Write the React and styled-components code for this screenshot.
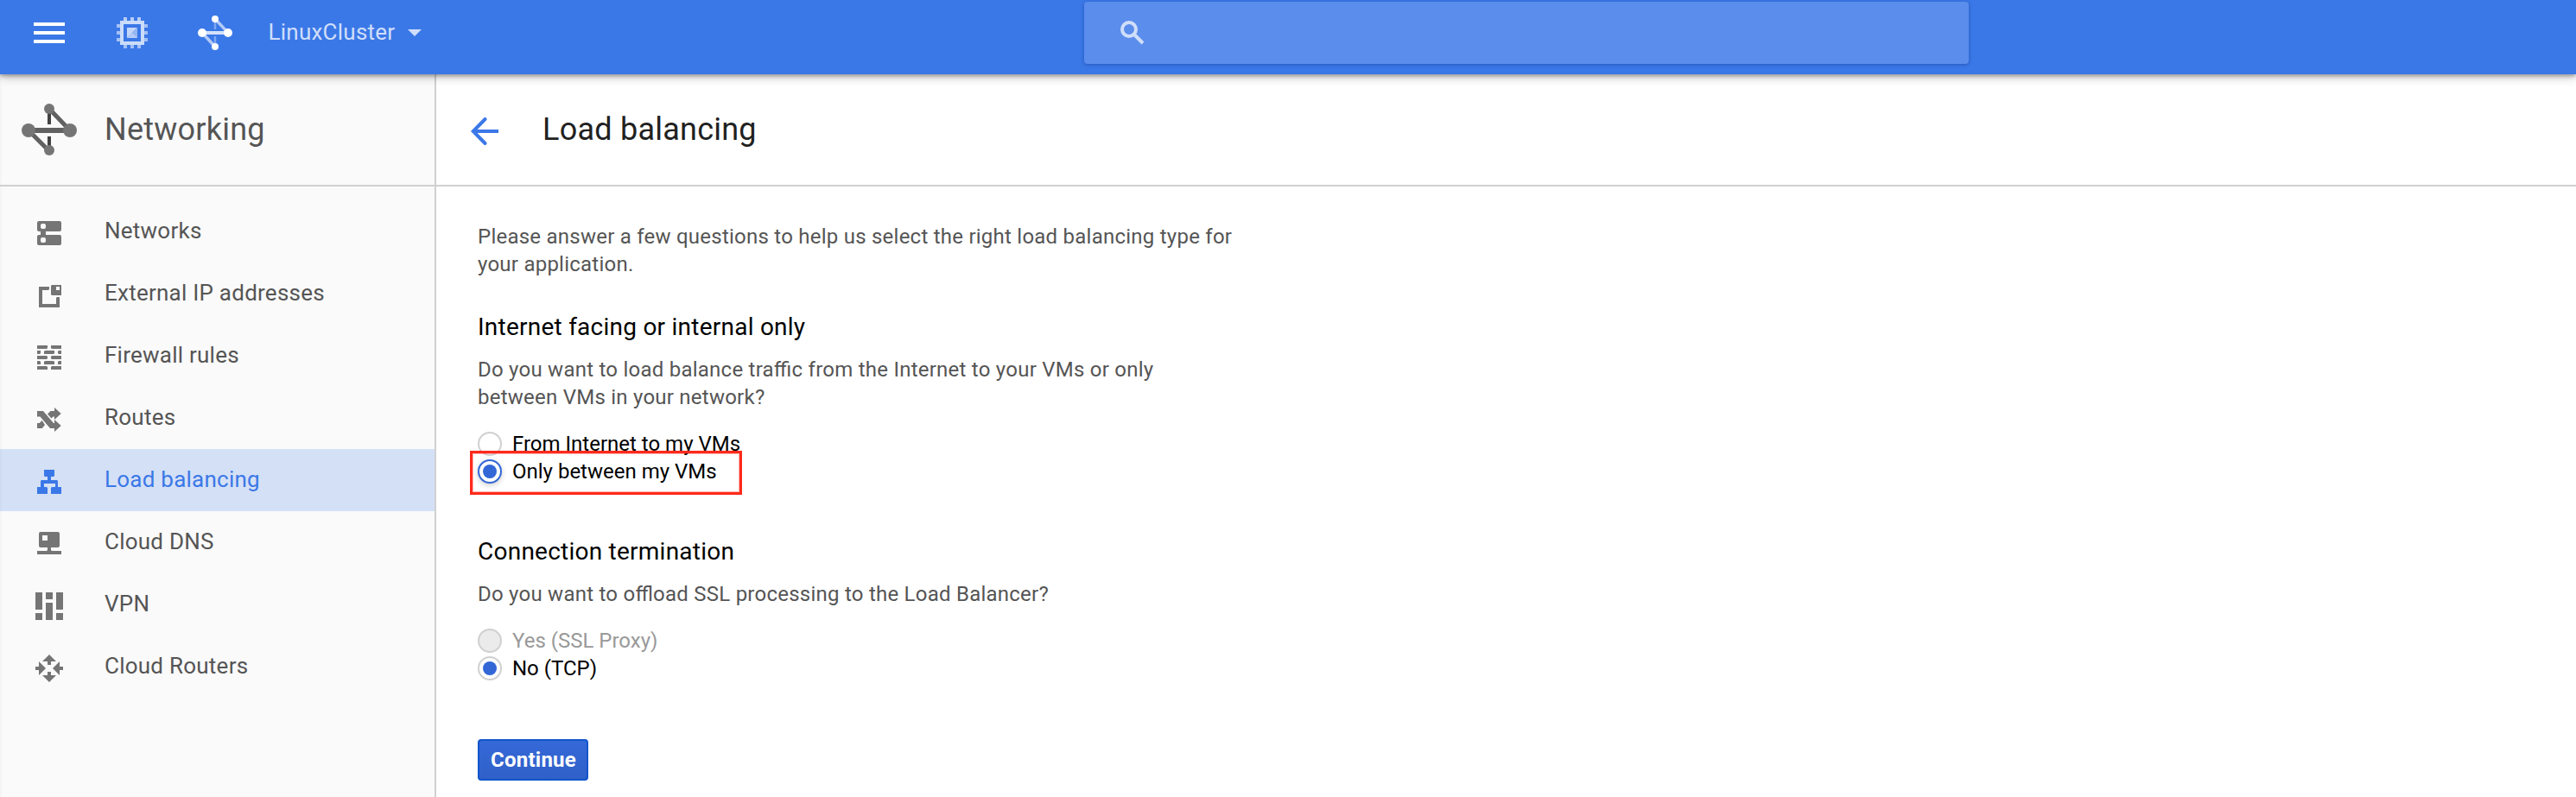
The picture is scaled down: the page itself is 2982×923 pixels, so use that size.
import React from "react";
import styled, { createGlobalStyle } from "styled-components";

const GlobalStyle = createGlobalStyle`
  * { box-sizing: border-box; }
  body {
    margin: 0;
    background: #fff;
    font-family: Roboto, "Liberation Sans", sans-serif;
    font-size: 24px;
    letter-spacing: 0.01em;
    font-feature-settings: "liga" 1;
    -webkit-font-smoothing: antialiased;
  }
  h1, h2, p, ul { margin: 0; padding: 0; font-weight: 400; }
  button { font: inherit; letter-spacing: inherit; }
  svg { display: block; flex: none; }
`;

const Page = styled.div`
  display: flex;
  flex-direction: column;
  height: 923px;
  overflow: hidden;
`;

const TopBar = styled.header`
  position: relative;
  z-index: 1;
  flex: none;
  display: grid;
  grid-template-columns: 1255px 1024px 1fr;
  height: 86px;
  padding-top: 2px;
  background: #3b78e7;
  box-shadow: 0 2px 4px rgba(0, 0, 0, 0.28), 0 4px 10px rgba(0, 0, 0, 0.22);
`;

const TopLeft = styled.div`
  display: flex;
  align-items: center;
  height: 72px;
  padding-left: 39px;
`;

const IconButton = styled.button`
  display: flex;
  padding: 0;
  margin: 0 ${(p) => p.$gap}px 0 0;
  border: 0;
  background: none;
`;

const ProjectMenu = styled.div`
  display: flex;
  align-items: center;
  gap: 15px;
  font-size: 26px;
  line-height: 32px;
  color: #cfdefa;
`;

const ProjectName = styled.span`
  padding-bottom: 2px;
`;

const SearchBox = styled.div`
  display: flex;
  align-items: center;
  height: 72px;
  padding-left: 42px;
  border-radius: 4px;
  background: #5b8dec;
  box-shadow: 0 1px 4px rgba(20, 60, 150, 0.55);
`;

const Body = styled.div`
  flex: 1;
  display: flex;
`;

const Sidebar = styled.aside`
  flex: none;
  width: 505px;
  border-right: 2px solid #d0d0d0;
  background: #fafafa;
  box-shadow: inset 3px 0 3px -2px rgba(0, 0, 0, 0.04);
`;

const SidebarHeader = styled.div`
  display: flex;
  align-items: center;
  gap: 32px;
  height: 130px;
  padding-left: 25px;
  border-bottom: 2px solid #d0d0d0;
  font-size: 36px;
  line-height: 44px;
  color: #555;
`;

const NavList = styled.ul`
  list-style: none;
  padding-top: 16px;
`;

const NavItem = styled.li`
  display: flex;
  align-items: center;
  gap: 46px;
  height: 72px;
  padding-left: 39px;
  font-size: 26px;
  color: ${(p) => (p.$active ? "#3b78e7" : "#555")};
  background: ${(p) => (p.$active ? "rgba(59, 120, 231, 0.2)" : "none")};

  svg {
    margin-top: 4px;
    color: ${(p) => (p.$active ? "#3b78e7" : "#757575")};
  }
`;

const NavLabel = styled.span`
  line-height: 32px;
  padding-bottom: 2px;
`;

const Main = styled.main`
  flex: 1;
`;

const PageHeader = styled.div`
  display: flex;
  align-items: center;
  gap: 50px;
  height: 130px;
  padding-left: 40px;
  border-bottom: 2px solid #d0d0d0;

  svg { margin-top: 4px; }
`;

const PageTitle = styled.h1`
  font-size: 36px;
  line-height: 44px;
  color: #212121;
`;

const Form = styled.form`
  display: flex;
  flex-direction: column;
  align-items: flex-start;
  width: 928px;
  padding: 42px 0 0 48px;
`;

const Intro = styled.p`
  line-height: 32px;
  color: #555;
  margin-bottom: 36px;
`;

const Question = styled.section`
  margin-bottom: ${(p) => p.$after}px;
`;

const QuestionTitle = styled.h2`
  font-size: 28px;
  line-height: 42px;
  color: #000;
`;

const QuestionText = styled.p`
  margin: 12px 0 22px;
  line-height: 32px;
  color: #555;
`;

const Option = styled.label`
  position: relative;
  display: flex;
  align-items: center;
  gap: 12px;
  height: 32px;
  letter-spacing: 0;
  color: ${(p) => (p.$disabled ? "#999" : "#000")};
`;

const RadioCircle = styled.span`
  display: flex;
  align-items: center;
  justify-content: center;
  width: 28px;
  height: 28px;
  border: 2px solid ${(p) => (p.$focused ? "#3367d6" : "#d0d0d0")};
  border-radius: 50%;
  background: ${(p) => (p.$disabled ? "#ebebeb" : "#fff")};
  box-shadow: ${(p) => (p.$focused ? "0 2px 6px rgba(0, 0, 0, 0.2)" : "none")};

  &::after {
    content: "";
    width: 16px;
    height: 16px;
    border-radius: 50%;
    background: ${(p) => (p.$checked ? "#3367d6" : "transparent")};
  }
`;

const Highlight = styled.span`
  position: absolute;
  left: -9px;
  top: -8px;
  width: 315px;
  height: 51px;
  border: 3px solid #ff2a1c;
  box-shadow: inset 0 0 0 1px rgba(255, 42, 28, 0.35);
`;

const SubmitButton = styled.button`
  display: flex;
  align-items: center;
  justify-content: center;
  width: 128px;
  height: 48px;
  padding: 0 0 0 1px;
  border: 2px solid #1155cc;
  border-radius: 4px;
  background: linear-gradient(#3569d8, #3060c8);
  color: #fff;
  font-weight: 700;
  line-height: 32px;
`;

const MenuIcon = () => (
  <svg width="36" height="24" viewBox="0 0 36 24" fill="#fff">
    <path d="M0 0h36v4H0zM0 10h36v4H0zM0 20h36v4H0z" />
  </svg>
);

const ChipIcon = () => (
  <svg width="36" height="36" viewBox="0 0 36 36">
    <path fill="#b8cef7" d="M8 0h4v4H8zM16 0h4v4h-4zM24 0h4v4h-4z" />
    <path fill="#a4c0f4" d="M0 8h4v4H0zM0 16h4v4H0zM0 24h4v4H0zM8 32h4v4H8zM16 32h4v4h-4zM24 32h4v4h-4zM32 8h4v4h-4zM32 16h4v4h-4zM32 24h4v4h-4z" />
    <path fill="#cbdcfa" fillRule="evenodd" d="M4 4h28v28H4zM8 8v20h20V8z" />
    <path fill="#c4d6f8" d="M12 12h12L12 24z" />
    <path fill="#96b6f2" d="M24 12v12H12z" />
    <path fill="#b4cbf6" d="M12 24l6-6 6 6z" />
  </svg>
);

const NetworkTopIcon = () => (
  <svg width="40" height="40" viewBox="0 0 40 40">
    <path stroke="#7ea7f0" strokeWidth="2.5" d="M20 6v10M20 24v10" />
    <path stroke="#b4cbf7" strokeWidth="3.4" d="M20 4l15 16M5 20l15 16" />
    <path stroke="#d3e1fb" strokeWidth="4" d="M5 20h30" />
    <g fill="#fff">
      <circle cx="5" cy="20" r="5" />
      <circle cx="35" cy="20" r="5" />
      <circle cx="20" cy="4" r="4" />
      <circle cx="20" cy="36" r="4" />
    </g>
  </svg>
);

const NetworkingIcon = () => (
  <svg width="64" height="60" viewBox="0 0 64 60">
    <path stroke="#424242" strokeWidth="4" d="M32 8v16M32 38v16" />
    <path stroke="#616161" strokeWidth="5" d="M32 6l24 25M8 31l24 24" />
    <path stroke="#616161" strokeWidth="6" d="M8 31h48" />
    <g fill="#757575">
      <circle cx="8" cy="31" r="8" />
      <circle cx="56" cy="31" r="8" />
      <circle cx="32" cy="6" r="6" />
      <circle cx="32" cy="54" r="6" />
    </g>
  </svg>
);

const CaretIcon = () => (
  <svg width="16" height="8" viewBox="0 0 16 8" fill="#cfdefa">
    <path d="M0 0h16L8 8z" />
  </svg>
);

const SearchIcon = () => (
  <svg width="28" height="28" viewBox="0 0 28 28" fill="none" stroke="#cfdefa" strokeWidth="4">
    <circle cx="10" cy="10" r="8" />
    <path d="M15.5 15.5L26 26" />
  </svg>
);

const BackIcon = () => (
  <svg width="33" height="32" viewBox="0 0 33 32" fill="none" stroke="#3b78e7" strokeWidth="4">
    <path d="M3 16h29" />
    <path d="M16.500 2L2.800 16l13.700 14" strokeLinecap="round" />
  </svg>
);

const NAV_PATHS = {
  networks:
    "M6 4h24a2 2 0 0 1 2 2v8a2 2 0 0 1-2 2H14v4h16a2 2 0 0 1 2 2v8a2 2 0 0 1-2 2H6a2 2 0 0 1-2-2v-8a2 2 0 0 1 2-2h2v-4H6a2 2 0 0 1-2-2V6a2 2 0 0 1 2-2zM10 7a2 2 0 0 0-2 2v2a2 2 0 0 0 2 2h2a2 2 0 0 0 2-2V9a2 2 0 0 0-2-2zM10 23a2 2 0 0 0-2 2v2a2 2 0 0 0 2 2h2a2 2 0 0 0 2-2v-2a2 2 0 0 0-2-2z",
  addresses:
    "M6 8h12v3l-1 1h-7v16h16v-7l1-1h3v12H6zM21 6h11v12H21l-1-1V7zM26 8v4h4V8z",
  firewall:
    "M4 4h12v3l-1 1H4zM20 4h12v4H21l-1-1zM4 10h4v3l-1 1H4zM13 10h11v3l-1 1H12v-3zM29 10h3v4h-3l-1-1v-2zM4 16h11l1 1v2l-1 1H4zM21 16h11v4H21l-1-1v-2zM4 22h3l1 1v3H4zM13 22h10l1 1v3H12v-3zM29 22h3v4h-4v-3zM4 28h11l1 1v3H4zM21 28h11v4H20v-3z",
  routes:
    "M4 8h7l12 14h1v-4l7.700 7L24 32v-4h-5L7.500 14.500H4zM24 4l7.700 7L24 18v-3.500h-1.500L20.500 16.500 16 11.500 19.500 8H24zM4 22h2.500l3.200-3L13 24l-3.200 4H4z",
  balancing:
    "M12 4h12v7l-1 1h-3v4h7l1 1v7h4v8H20v-7l1-1h4v-4H12v4h3l1 1v7H4v-8h4v-7l1-1h7v-4h-3l-1-1z",
  dns:
    "M8 4h20a2 2 0 0 1 2 2v14a2 2 0 0 1-2 2h-8v3l1 1h11v4H4v-4h11l1-1v-3H8a2 2 0 0 1-2-2V6a2 2 0 0 1 2-2zM10 8v6h6V8z",
  vpn: "M2 2h8v20H2zM2 26h8v8H2zM14 2h8v8h-8zM14 14h8v20h-8zM26 2h8v20h-8zM26 26h8v8h-8z",
  routers:
    "M18 2l8 8h-6v4h-4v-4h-6zM18 34l-8-8h6v-4h4v4h6zM2 16h4v-6l8 8-8 8v-6H2zM34 16h-4v-6l-8 8 8 8v-6h4z",
};

const NavIcon = ({ name }) => (
  <svg width="36" height="36" viewBox="0 0 36 36" fill="currentColor">
    <path fillRule="evenodd" d={NAV_PATHS[name]} />
  </svg>
);

const NAV = [
  ["networks", "Networks"],
  ["addresses", "External IP addresses"],
  ["firewall", "Firewall rules"],
  ["routes", "Routes"],
  ["balancing", "Load balancing"],
  ["dns", "Cloud DNS"],
  ["vpn", "VPN"],
  ["routers", "Cloud Routers"],
];

const RadioOption = ({ label, checked, focused, disabled, highlighted }) => (
  <Option $disabled={disabled}>
    <RadioCircle $checked={checked} $focused={focused} $disabled={disabled} />
    {label}
    {highlighted && <Highlight />}
  </Option>
);

export default function App() {
  return (
    <Page>
      <GlobalStyle />
      <TopBar>
        <TopLeft>
          <IconButton $gap={60} aria-label="Menu"><MenuIcon /></IconButton>
          <IconButton $gap={58} aria-label="Compute Engine"><ChipIcon /></IconButton>
          <IconButton $gap={41.5} aria-label="Networking"><NetworkTopIcon /></IconButton>
          <ProjectMenu>
            <ProjectName>LinuxCluster</ProjectName>
            <CaretIcon />
          </ProjectMenu>
        </TopLeft>
        <SearchBox><SearchIcon /></SearchBox>
      </TopBar>
      <Body>
        <Sidebar>
          <SidebarHeader>
            <NetworkingIcon />
            Networking
          </SidebarHeader>
          <NavList>
            {NAV.map(([icon, label]) => (
              <NavItem key={icon} $active={icon === "balancing"}>
                <NavIcon name={icon} />
                <NavLabel>{label}</NavLabel>
              </NavItem>
            ))}
          </NavList>
        </Sidebar>
        <Main>
          <PageHeader>
            <BackIcon />
            <PageTitle>Load balancing</PageTitle>
          </PageHeader>
          <Form>
            <Intro>
              Please answer a few questions to help us select the right load balancing type for your application.
            </Intro>
            <Question $after={56}>
              <QuestionTitle>Internet facing or internal only</QuestionTitle>
              <QuestionText>
                Do you want to load balance traffic from the Internet to your VMs or only between VMs in your network?
              </QuestionText>
              <RadioOption label="From Internet to my VMs" />
              <RadioOption label="Only between my VMs" checked focused highlighted />
            </Question>
            <Question $after={66}>
              <QuestionTitle>Connection termination</QuestionTitle>
              <QuestionText>Do you want to offload SSL processing to the Load Balancer?</QuestionText>
              <RadioOption label="Yes (SSL Proxy)" disabled />
              <RadioOption label="No (TCP)" checked />
            </Question>
            <SubmitButton type="button">Continue</SubmitButton>
          </Form>
        </Main>
      </Body>
    </Page>
  );
}
